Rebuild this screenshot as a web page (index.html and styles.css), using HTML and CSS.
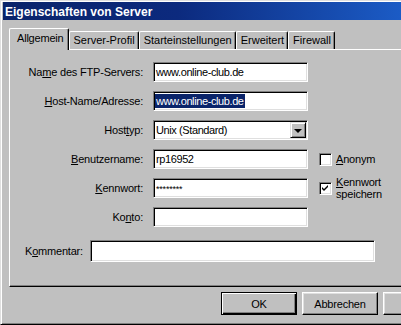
FILE: index.html
```html
<!DOCTYPE html>
<html lang="de">
  <head>
    <meta charset="UTF-8" />
    <title>Eigenschaften von Server</title>
    <link rel="stylesheet" href="styles.css">
  </head>
  <body>
    <div class="window">
      <div class="titlebar">Eigenschaften von Server</div>

      <div class="tabs">
        <div class="tab active">Allgemein</div>
        <div class="tab">Server-Profil</div>
        <div class="tab">Starteinstellungen</div>
        <div class="tab">Erweitert</div>
        <div class="tab">Firewall</div>
      </div>

      <div class="panel">
        <div class="form">
          <div class="lbl">Na<u>m</u>e des FTP-Servers:</div>
          <div class="field">www.online-club.de</div>
          <div></div>

          <div class="lbl"><u>H</u>ost-Name/Adresse:</div>
          <div class="field"><span class="sel">www.online-club.de</span></div>
          <div></div>

          <div class="lbl">Host<u>t</u>yp:</div>
          <div class="field select">
            <span>Unix (Standard)</span>
            <span class="arrow"><span class="tri"></span></span>
          </div>
          <div></div>

          <div class="lbl"><u>B</u>enutzername:</div>
          <div class="field">rp16952</div>
          <div class="opt">
            <span class="check"></span>
            <span><u>A</u>nonym</span>
          </div>

          <div class="lbl"><u>K</u>ennwort:</div>
          <div class="field pass">********</div>
          <div class="opt">
            <span class="check">
              <svg width="7" height="7" viewBox="0 0 7 7"><path d="M0 2 L2 4 L6 0 L6 2 L2 6 L0 4 Z" fill="#000"/></svg>
            </span>
            <span class="two"><u>K</u>ennwort<br>speichern</span>
          </div>

          <div class="lbl">Ko<u>n</u>to:</div>
          <div class="field"></div>
          <div></div>
        </div>

        <div class="comment">
          <div class="clbl">K<u>o</u>mmentar:</div>
          <div class="field wide"></div>
        </div>
      </div>

      <div class="buttons">
        <div class="btn default">OK</div>
        <div class="btn">Abbrechen</div>
        <div class="btn"></div>
      </div>
    </div>
  </body>
</html>
```

FILE: styles.css
```css
body {
  margin: 0;
  overflow: hidden;
  background-color: #c0c0c0;
  font-family: "Liberation Sans", Arial, sans-serif;
  font-size: 11px;
  color: #000;
}

u {
  text-decoration-thickness: 1px;
  text-underline-offset: 1px;
}

.window {
  width: 440px;
  height: 325px;
  box-sizing: border-box;
  padding: 1px 0 0 2px;
  background-color: #c0c0c0;
  border-top: 1px solid #dfdfdf;
  border-left: 1px solid #dfdfdf;
  border-bottom: 1px solid #000;
  box-shadow: inset 1px 1px #fff, inset 0 -1px #808080;
}

.titlebar {
  height: 18px;
  padding-left: 2px;
  line-height: 20px;
  font-size: 12px;
  font-weight: bold;
  color: #fff;
  background: linear-gradient(to right, #0a246a 0, #0c2a7e 40%, #1e64d2 100%);
}

/* tabs */

.tabs {
  display: flex;
  align-items: flex-end;
  height: 29px;
  padding-left: 6px;
}

.tab {
  position: relative;
  height: 18px;
  box-sizing: border-box;
  padding: 2px 3px 0 4px;
  line-height: 13px;
  border-top: 1px solid #fff;
  border-left: 1px solid #fff;
  border-right: 1px solid #000;
  border-top-left-radius: 2px;
  border-top-right-radius: 2px;
  box-shadow: inset -1px 0 #808080;
}

.tab.active {
  z-index: 1;
  height: 22px;
  margin-bottom: -1px;
  padding: 3px 4px 0 7px;
  letter-spacing: -0.2px;
  background-color: #c0c0c0;
}

/* panel */

.panel {
  height: 238px;
  box-sizing: border-box;
  margin-left: 6px;
  padding-top: 12px;
  border-top: 1px solid #fff;
  border-left: 1px solid #fff;
  border-bottom: 1px solid #000;
  box-shadow: inset 0 -1px #808080;
}

.form {
  display: grid;
  grid-template-columns: 133px 155px auto;
  grid-auto-rows: 20px;
  column-gap: 10px;
  row-gap: 9px;
  align-items: center;
}

.lbl {
  text-align: right;
  letter-spacing: -0.2px;
  white-space: nowrap;
}

.field {
  height: 20px;
  box-sizing: border-box;
  padding: 0 2px;
  line-height: 18px;
  letter-spacing: -0.4px;
  white-space: nowrap;
  overflow: hidden;
  background-color: #fff;
  border: 1px solid;
  border-color: #808080 #fff #fff #808080;
  box-shadow: inset 1px 1px #000, inset -1px -1px #dfdfdf;
}

.sel {
  margin-left: -1px;
  padding: 1px;
  background-color: #0a246a;
  color: #fff;
}

.pass {
  font-size: 9px;
  letter-spacing: -0.2px;
  line-height: 20px;
}

.select {
  display: flex;
  align-items: center;
  justify-content: space-between;
  padding-right: 1px;
}

.arrow {
  display: flex;
  align-items: center;
  justify-content: center;
  width: 16px;
  height: 16px;
  box-sizing: border-box;
  background-color: #c0c0c0;
  border: 1px solid;
  border-color: #dfdfdf #000 #000 #dfdfdf;
  box-shadow: inset 1px 1px #fff, inset -1px -1px #808080;
}

.tri {
  width: 0;
  height: 0;
  border-left: 4px solid transparent;
  border-right: 4px solid transparent;
  border-top: 4px solid #000;
  margin-top: 1px;
}

.opt {
  display: flex;
  align-items: center;
  gap: 4px;
  padding-left: 1px;
  letter-spacing: -0.2px;
  white-space: nowrap;
}

.two {
  line-height: 12px;
}

.check {
  display: flex;
  align-items: center;
  justify-content: center;
  flex: none;
  width: 13px;
  height: 13px;
  box-sizing: border-box;
  background-color: #fff;
  border: 1px solid;
  border-color: #808080 #fff #fff #808080;
  box-shadow: inset 1px 1px #000, inset -1px -1px #dfdfdf;
}

.comment {
  display: flex;
  align-items: center;
  margin-top: 13px;
  padding-left: 15px;
}

.clbl {
  width: 65px;
  letter-spacing: -0.2px;
}

.field.wide {
  width: 285px;
  height: 22px;
}

/* buttons */

.buttons {
  display: flex;
  gap: 5px;
  margin-top: 5px;
  padding-left: 218px;
}

.btn {
  display: flex;
  align-items: center;
  justify-content: center;
  flex: none;
  width: 76px;
  height: 23px;
  box-sizing: border-box;
  letter-spacing: -0.2px;
  border: 1px solid;
  border-color: #fff #000 #000 #fff;
  box-shadow: inset -1px -1px #808080, inset 1px 1px #dfdfdf;
}

.btn.default {
  border-color: #000;
  box-shadow: inset 1px 1px #fff, inset -1px -1px #000, inset -2px -2px #808080;
}
```
